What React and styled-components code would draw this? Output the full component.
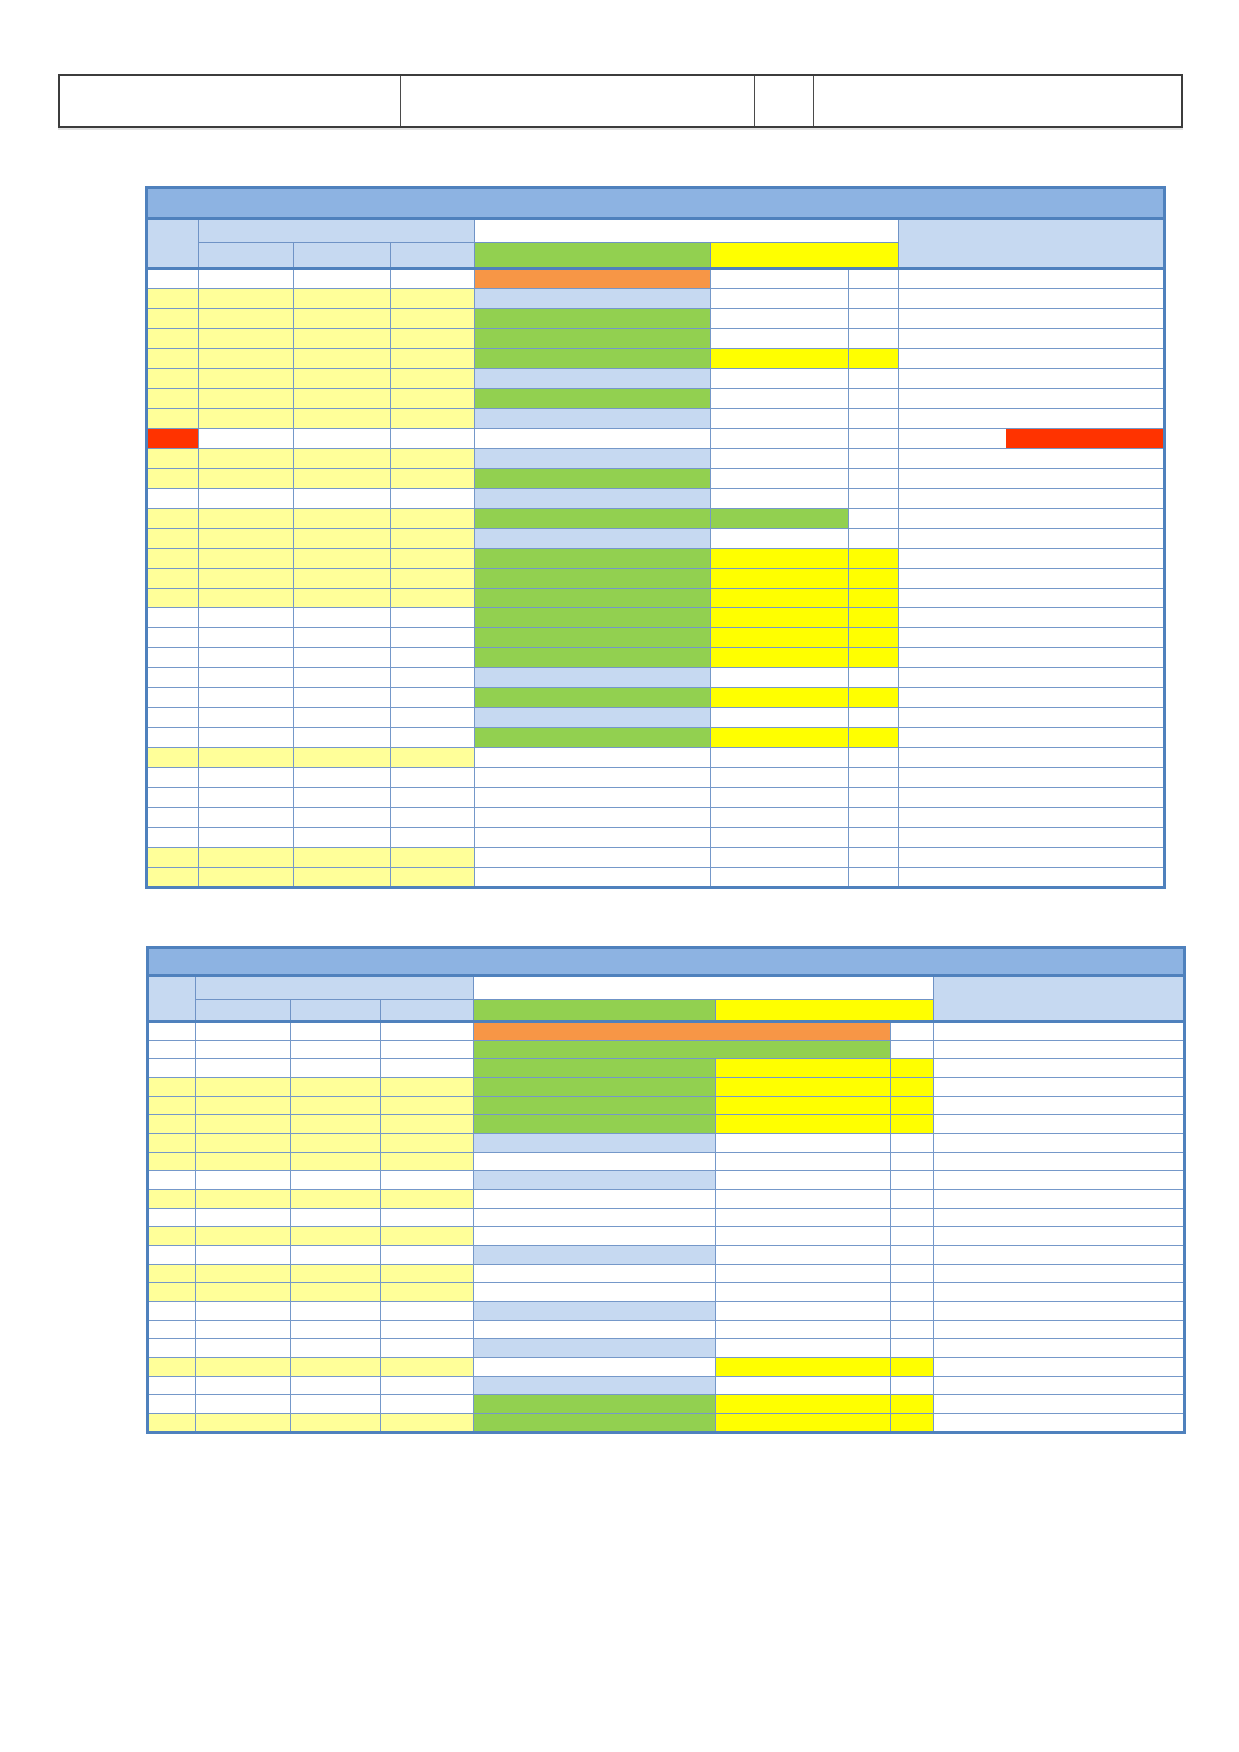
import React from 'react';
import styled, { createGlobalStyle } from 'styled-components';

const GlobalStyle = createGlobalStyle`
  html, body {
    margin: 0;
    padding: 0;
    background: #ffffff;
    font-family: "Liberation Sans", Arial, sans-serif;
  }
`;

const fills = {
  W: '#ffffff',
  Y: '#ffff99',
  B: '#c6d9f1',
  G: '#92d050',
  Z: '#ffff00',
  O: '#f79646',
  R: '#ff3300',
  // red block that only covers the right part of the cell
  RP: 'linear-gradient(to right, #ffffff 107px, #ff3300 107px)',
};

const Page = styled.div`
  display: flex;
  flex-direction: column;
  align-items: flex-start;
  padding-top: 74px;
  padding-bottom: 300px;
`;

const InfoBar = styled.table`
  margin-left: 58px;
  width: 1123px;
  height: 54px;
  border-collapse: collapse;
  table-layout: fixed;
  border: 2px solid #3c3c3c;
  box-shadow: 0 2px 0 #e2e2e2;
`;

const InfoCell = styled.td`
  padding: 0;
  border-left: 1px solid #4a4a4a;
  border-right: 1px solid #4a4a4a;
`;

const Sheet = styled.table`
  margin-left: ${p => p.$left}px;
  margin-top: ${p => p.$top}px;
  width: ${p => p.$width}px;
  border-collapse: collapse;
  table-layout: fixed;
  border: 3px solid #4f81bd;
  font-size: 0;
`;

const TitleCell = styled.td`
  padding: 0;
  height: ${p => p.$h}px;
  background: #8db3e2;
  border-bottom: 3px solid #4f81bd;
`;

const HeadRow = styled.tr`
  height: ${p => p.$h}px;
`;

const HeadCell = styled.td`
  padding: 0;
  background: ${p => fills[p.$fill]};
  border: 1px solid #6f93c6;
  border-bottom: ${p => (p.$last ? '3px solid #4f81bd' : '1px solid #6f93c6')};
`;

const DataRow = styled.tr`
  height: ${p => p.$h}px;
`;

const Cell = styled.td`
  padding: 0;
  background: ${p => fills[p.$fill]};
  background-repeat: no-repeat;
  background-origin: border-box;
  border: 1px solid #7598c9;
`;

// row helper: left group (cols 1-4), col 5, col 6, col 7, col 8
const r = (left, mid, c6 = 'W', c7 = 'W', c8 = 'W') => [
  [left], [left], [left], [left], [mid], [c6], [c7], [c8],
];

const firstRows = [
  r('W', 'O'),
  r('Y', 'B'),
  r('Y', 'G'),
  r('Y', 'G'),
  r('Y', 'G', 'Z', 'Z'),
  r('Y', 'B'),
  r('Y', 'G'),
  r('Y', 'B'),
  [['R'], ['W'], ['W'], ['W'], ['W'], ['W'], ['W'], ['RP']],
  r('Y', 'B'),
  r('Y', 'G'),
  r('W', 'B'),
  r('Y', 'G', 'G'),
  r('Y', 'B'),
  r('Y', 'G', 'Z', 'Z'),
  r('Y', 'G', 'Z', 'Z'),
  r('Y', 'G', 'Z', 'Z'),
  r('W', 'G', 'Z', 'Z'),
  r('W', 'G', 'Z', 'Z'),
  r('W', 'G', 'Z', 'Z'),
  r('W', 'B'),
  r('W', 'G', 'Z', 'Z'),
  r('W', 'B'),
  r('W', 'G', 'Z', 'Z'),
  r('Y', 'W'),
  r('W', 'W'),
  r('W', 'W'),
  r('W', 'W'),
  r('W', 'W'),
  r('Y', 'W'),
  r('Y', 'W'),
];

const secondRows = [
  [['W'], ['W'], ['W'], ['W'], ['O', 2], ['W'], ['W']],
  [['W'], ['W'], ['W'], ['W'], ['G', 2], ['W'], ['W']],
  r('W', 'G', 'Z', 'Z'),
  r('Y', 'G', 'Z', 'Z'),
  r('Y', 'G', 'Z', 'Z'),
  r('Y', 'G', 'Z', 'Z'),
  r('Y', 'B'),
  r('Y', 'W'),
  r('W', 'B'),
  r('Y', 'W'),
  r('W', 'W'),
  r('Y', 'W'),
  r('W', 'B'),
  r('Y', 'W'),
  r('Y', 'W'),
  r('W', 'B'),
  r('W', 'W'),
  r('W', 'B'),
  r('Y', 'W', 'Z', 'Z'),
  r('W', 'B'),
  r('W', 'G', 'Z', 'Z'),
  r('Y', 'G', 'Z', 'Z'),
];

const Grid = ({ left, top, cols, titleH, headH, rowH, rows }) => {
  const width = cols.reduce((a, b) => a + b, 0);
  return (
    <Sheet $left={left} $top={top} $width={width}>
      <colgroup>
        {cols.map((w, i) => <col key={i} style={{ width: w }} />)}
      </colgroup>
      <tbody>
        <tr>
          <TitleCell colSpan={8} $h={titleH} />
        </tr>
        <HeadRow $h={headH[0]}>
          <HeadCell rowSpan={2} $fill="B" $last />
          <HeadCell colSpan={3} $fill="B" />
          <HeadCell colSpan={3} $fill="W" />
          <HeadCell rowSpan={2} $fill="B" $last />
        </HeadRow>
        <HeadRow $h={headH[1]}>
          <HeadCell $fill="B" $last />
          <HeadCell $fill="B" $last />
          <HeadCell $fill="B" $last />
          <HeadCell $fill="G" $last />
          <HeadCell colSpan={2} $fill="Z" $last />
        </HeadRow>
        {rows.map((cells, i) => (
          <DataRow key={i} $h={rowH}>
            {cells.map(([fill, span], j) => (
              <Cell key={j} colSpan={span || 1} $fill={fill} />
            ))}
          </DataRow>
        ))}
      </tbody>
    </Sheet>
  );
};

export default function App() {
  return (
    <>
      <GlobalStyle />
      <Page>
        <InfoBar>
          <colgroup>
            <col style={{ width: 341 }} />
            <col style={{ width: 354 }} />
            <col style={{ width: 59 }} />
            <col style={{ width: 369 }} />
          </colgroup>
          <tbody>
            <tr>
              <InfoCell />
              <InfoCell />
              <InfoCell />
              <InfoCell />
            </tr>
          </tbody>
        </InfoBar>

        <Grid
          left={145}
          top={58}
          cols={[52, 95, 97, 84, 236, 138, 50, 266]}
          titleH={28}
          headH={[24, 26]}
          rowH={19.97}
          rows={firstRows}
        />

        <Grid
          left={146}
          top={57}
          cols={[48, 95, 90, 93, 242, 175, 43, 251]}
          titleH={25}
          headH={[24, 22]}
          rowH={18.68}
          rows={secondRows}
        />
      </Page>
    </>
  );
}
